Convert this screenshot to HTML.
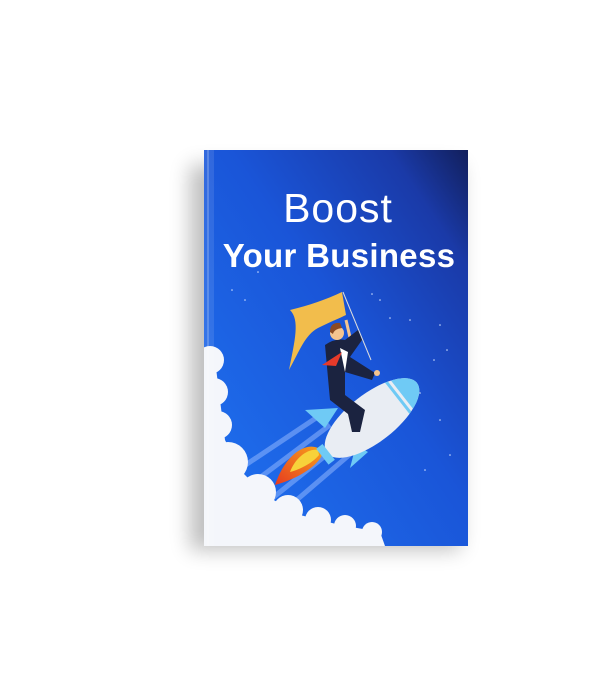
<!DOCTYPE html>
<html><head><style>
html,body{margin:0;padding:0;width:600px;height:680px;background:#fff;overflow:hidden}
</style></head><body>
<svg width="600" height="680" viewBox="0 0 600 680" xmlns="http://www.w3.org/2000/svg">
<defs>
<linearGradient id="bg" x1="0" y1="1" x2="1" y2="0">
<stop offset="0" stop-color="#1f74f2"/><stop offset="0.55" stop-color="#1a55d8"/><stop offset="0.85" stop-color="#1a3aa8"/><stop offset="1" stop-color="#121f5c"/>
</linearGradient>
<filter id="sh" x="-30%" y="-30%" width="160%" height="160%"><feGaussianBlur stdDeviation="10"/></filter>
<linearGradient id="fl" x1="0" y1="1" x2="1" y2="0"><stop offset="0" stop-color="#e63a20"/><stop offset="1" stop-color="#f7a11c"/></linearGradient>
<clipPath id="bk"><rect x="204" y="150" width="264" height="396"/></clipPath>
<clipPath id="rk"><ellipse cx="372" cy="418" rx="57" ry="24"/></clipPath>
</defs>
<rect x="190" y="165" width="270" height="385" fill="#000" opacity="0.25" filter="url(#sh)"/>
<rect x="204" y="150" width="264" height="396" fill="url(#bg)"/>
<g clip-path="url(#bk)">
<g fill="#cfe0ff">
<circle cx="232" cy="290" r="0.8"/><circle cx="245" cy="300" r="0.8"/><circle cx="372" cy="294" r="0.8"/><circle cx="380" cy="300" r="0.8"/><circle cx="390" cy="318" r="0.8"/><circle cx="410" cy="320" r="0.8"/><circle cx="440" cy="325" r="0.8"/><circle cx="447" cy="350" r="0.8"/><circle cx="434" cy="360" r="0.8"/><circle cx="420" cy="393" r="0.8"/><circle cx="440" cy="420" r="0.8"/><circle cx="450" cy="455" r="0.8"/><circle cx="425" cy="470" r="0.8"/><circle cx="258" cy="272" r="0.8"/>
</g>
<g stroke="#8fb6ff" stroke-width="5" opacity="0.55">
<line x1="325" y1="412" x2="238" y2="470"/><line x1="330" y1="425" x2="250" y2="485"/><line x1="345" y1="440" x2="270" y2="500"/><line x1="355" y1="450" x2="285" y2="510"/>
</g>
<g fill="#f4f6fb">
<circle cx="210" cy="360" r="14"/><circle cx="214" cy="392" r="14"/><circle cx="218" cy="425" r="14"/><circle cx="228" cy="462" r="20"/><circle cx="258" cy="492" r="18"/><circle cx="288" cy="510" r="15"/><circle cx="318" cy="520" r="13"/><circle cx="345" cy="526" r="11"/><circle cx="372" cy="532" r="10"/>
<path d="M204 350 L215 360 L220 400 L225 440 L240 470 L265 495 L300 515 L340 525 L380 532 L385 546 L204 546 Z"/>
</g>
<path d="M318 448 C305 442 285 455 275 485 C300 478 318 465 322 455 Z" fill="url(#fl)"/>
<path d="M318 450 C308 448 295 458 290 472 C305 468 315 460 319 455 Z" fill="#f7d23a"/>
<path d="M338 408 L305 410 L325 428 Z" fill="#6fcaf5"/>
<path d="M356 445 L350 468 L368 452 Z" fill="#6fcaf5"/>
<g transform="rotate(-38 372 418)">
<ellipse cx="372" cy="418" rx="57" ry="24" fill="#e9edf3"/>
<g clip-path="url(#rk)">
<rect x="410" y="390" width="40" height="60" fill="#6fcaf5"/>
<rect x="404" y="390" width="3" height="60" fill="#6fcaf5"/>
</g>
<rect x="309" y="408" width="8" height="20" fill="#6fcaf5"/>
</g>
<path d="M352 346 L346 320" stroke="#f4c48f" stroke-width="3"/>
<path d="M343 292 L371 360" stroke="#ddd" stroke-width="1"/>
<path d="M342 292 C325 300 310 305 290 310 C300 320 295 340 289 370 C300 350 305 335 318 328 C330 322 340 318 346 315 Z" fill="#f2bd4c"/>
<path d="M325 345 Q335 338 345 340 L358 330 L362 340 L350 357 L375 373 L372 380 L345 372 L345 395 L365 410 L360 432 L352 432 L348 414 L330 400 Z" fill="#1b2340"/>
<path d="M340 348 L348 352 L345 372 Z" fill="#fff"/>
<path d="M322 365 L342 352 L336 366 Z" fill="#e63a2a"/>
<circle cx="337" cy="333" r="7" fill="#f4c48f"/>
<path d="M330 332 Q330 322 340 323 L342 328 Q334 329 333 334 Z" fill="#8b4a22"/>
<circle cx="377" cy="373" r="3" fill="#f4c48f"/>
</g>
<rect x="204" y="150" width="10" height="396" fill="#fff" opacity="0.1"/>
<rect x="207" y="150" width="2" height="396" fill="#fff" opacity="0.2"/>
<text x="338" y="222" text-anchor="middle" font-family="Liberation Sans, sans-serif" font-size="41" font-weight="300" fill="#fff" letter-spacing="1">Boost</text>
<text x="339" y="267" text-anchor="middle" font-family="Liberation Sans, sans-serif" font-size="33" font-weight="bold" fill="#fff" letter-spacing="0.3">Your Business</text>
</svg>
</body></html>
